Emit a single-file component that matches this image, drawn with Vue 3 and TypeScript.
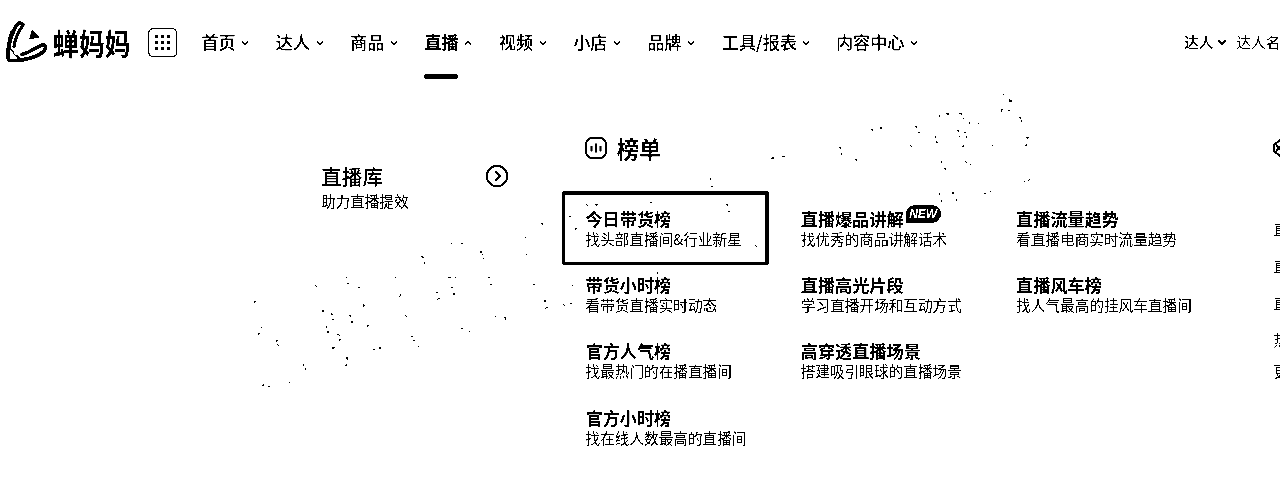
<script setup lang="ts">
interface NavItem { label: string; active?: boolean }
interface Entry { title: string; desc: string; badge?: boolean; boxed?: boolean }

const nav: NavItem[] = [
  { label: '首页' }, { label: '达人' }, { label: '商品' }, { label: '直播', active: true },
  { label: '视频' }, { label: '小店' }, { label: '品牌' }, { label: '工具/报表' }, { label: '内容中心' },
]

const columns: Entry[][] = [
  [
    { title: '今日带货榜', desc: '找头部直播间&行业新星', boxed: true },
    { title: '带货小时榜', desc: '看带货直播实时动态' },
    { title: '官方人气榜', desc: '找最热门的在播直播间' },
    { title: '官方小时榜', desc: '找在线人数最高的直播间' },
  ],
  [
    { title: '直播爆品讲解', desc: '找优秀的商品讲解话术', badge: true },
    { title: '直播高光片段', desc: '学习直播开场和互动方式' },
    { title: '高穿透直播场景', desc: '搭建吸引眼球的直播场景' },
  ],
  [
    { title: '直播流量趋势', desc: '看直播电商实时流量趋势' },
    { title: '直播风车榜', desc: '找人气最高的挂风车直播间' },
  ],
]

const side: string[] = ['直', '直', '直', '热', '更']

// x, y, width, height of each fleck in the background texture
const flecks: number[][] = [
  [254,301,2,1],[254,302,1,1],[315,285,1,1],[316,286,1,1],[346,277,1,1],[347,283,2,1],[358,287,2,1],[395,277,1,1],
  [421,256,2,1],[422,257,2,1],[424,262,1,2],[451,243,1,1],[461,243,2,1],[480,251,2,2],[482,254,1,1],[483,258,1,1],
  [525,237,1,1],[526,254,1,1],[541,223,2,1],[542,224,1,1],[448,277,3,1],[455,277,1,1],[488,277,2,1],[490,284,2,1],
  [451,287,2,1],[453,293,2,2],[436,292,2,1],[438,298,2,1],[437,299,1,1],[399,296,1,1],[400,294,1,2],[533,284,2,1],
  [544,300,2,2],[546,307,2,1],[545,308,1,1],[563,304,1,1],[564,305,1,1],[570,303,2,1],[572,285,1,1],[363,304,1,3],
  [364,305,1,1],[322,310,2,2],[331,313,1,2],[332,314,1,1],[332,319,2,1],[349,315,2,1],[350,316,1,1],[351,321,2,2],
  [326,326,1,2],[327,331,2,2],[337,334,2,1],[339,335,1,1],[339,339,2,1],[339,340,1,1],[367,325,2,1],[367,326,1,1],
  [332,347,3,1],[332,348,2,1],[373,349,2,1],[379,347,2,2],[346,357,2,2],[347,359,1,1],[346,364,1,2],[345,365,1,1],
  [405,315,1,1],[406,316,1,1],[411,336,2,1],[413,340,2,1],[418,346,1,1],[461,328,2,1],[469,331,1,1],[495,316,1,1],
  [504,317,2,1],[505,318,1,2],[261,327,1,1],[258,333,2,1],[258,334,1,1],[276,340,2,1],[276,341,1,1],[277,344,1,1],
  [278,345,1,1],[303,364,1,2],[305,368,1,2],[262,385,2,1],[263,384,1,1],[268,386,2,1],[289,382,1,1],
  [586,204,1,1],[587,205,1,1],[595,204,3,1],[596,205,1,1],[570,216,1,1],[569,216,1,1],[575,228,2,1],[575,229,1,1],
  [650,202,2,1],[710,178,1,2],[711,186,2,1],[726,204,2,1],[727,205,1,1],[728,211,2,1],[755,245,1,1],[756,246,1,1],
  [657,272,1,2],[771,158,3,1],[772,157,2,1],[871,129,2,1],[872,130,1,1],[880,127,2,2],[782,156,3,1],
  [839,147,2,1],[840,148,1,1],[841,153,1,2],[855,159,2,1],[856,160,1,1],[915,126,2,1],[916,127,1,1],[918,132,2,1],
  [910,145,1,1],[911,146,1,1],[939,115,1,2],[946,113,3,1],[947,114,2,1],[959,113,3,1],[961,114,1,1],[963,118,1,1],
  [969,122,1,2],[978,123,1,1],[935,136,1,2],[936,141,1,2],[937,142,1,1],[957,130,2,1],[958,131,1,1],[964,132,2,1],
  [959,136,1,1],[966,136,1,2],[962,146,2,1],[963,145,1,1],[1003,94,1,1],[1009,99,1,1],[1009,100,3,2],
  [1001,109,2,1],[1001,110,1,2],[1008,110,2,1],[1019,117,2,1],[1020,118,1,1],[1021,120,1,2],[1026,137,3,1],
  [1027,138,1,1],[1026,144,1,2],[1025,145,1,1],[992,145,1,1],[941,161,1,2],[944,168,2,1],[945,169,1,1],
  [965,161,1,1],[966,162,1,1],[970,164,1,1],[1024,181,1,1],[1028,180,1,1],[1029,179,1,1],[939,193,1,2],
  [941,200,1,2],[952,192,2,2],[956,199,1,2],[984,193,2,1],[990,191,1,1],
]
</script>

<template>
  <div class="page">
    <svg class="texture" width="1280" height="477" shape-rendering="crispEdges">
      <rect v-for="(f, i) in flecks" :key="i" :x="f[0]" :y="f[1]" :width="f[2]" :height="f[3]" />
    </svg>

    <header class="bar">
      <svg class="mark" width="44" height="44" viewBox="0 0 44 44" fill="none" stroke="#000">
        <path d="M18 4.500C15 2 12.500 3 10.500 7C6 16 3 27 2.800 36C2.800 40.500 5 41 9 40.500C20 40.500 32 37 38.500 31.500C42 28 40.500 24 37 25C30 28 26 32 17 34.500" stroke-width="3.700" stroke-linecap="round" />
        <path d="M17.500 5.500C14 11 10 18 9 27" stroke-width="3.200" stroke-linecap="round" />
        <path d="M7.500 11C4.500 17 3.500 24 3.200 34" stroke-width="3.600" />
        <path d="M5 28L9 33M8 33L13 38M12 35L16 39" stroke-width="1.300" />
        <path d="M27 9.500L34.500 17.500L24 19.500Z" fill="#000" stroke="none" />
      </svg>
      <span class="brand">蝉妈妈</span>
      <svg class="apps" width="30" height="30" viewBox="0 0 30 30">
        <rect x=".7" y=".7" width="28" height="28" rx="4.500" fill="none" stroke="#000" stroke-width="1.300" />
        <template v-for="r in 3" :key="r">
          <rect v-for="c in 3" :key="c" :x="1 + c * 6" :y="1 + r * 6" width="3" height="3" />
        </template>
      </svg>
      <nav class="nav">
        <div v-for="n in nav" :key="n.label" class="nav-item" :class="{ active: n.active }">
          <span>{{ n.label }}</span>
          <svg width="8" height="6" viewBox="0 0 8 6" fill="none" stroke="#000" stroke-width="1.200">
            <path :d="n.active ? 'M.8 4.600L4 1.500L7.200 4.600' : 'M.8 1.200L4 4.300L7.200 1.200'" />
          </svg>
        </div>
      </nav>
      <div class="search">
        <span class="kind">达人</span>
        <svg width="10" height="7" viewBox="0 0 10 7" fill="none" stroke="#000" stroke-width="1.600"><path d="M1 1.200L5 5L9 1.200" /></svg>
        <span class="hint">达人名</span>
      </div>
    </header>

    <main class="panel">
      <section class="library">
        <div>
          <h2>直播库</h2>
          <p>助力直播提效</p>
        </div>
        <svg width="24" height="24" viewBox="0 0 24 24" fill="none" stroke="#000" stroke-width="2">
          <circle cx="12" cy="12" r="10.200" /><path d="M10 7L15 12L10 17" />
        </svg>
      </section>

      <section class="ranks">
        <div class="heading">
          <svg width="22" height="22" viewBox="0 0 22 22" fill="none" stroke="#000">
            <rect x="1" y="1" width="20" height="20" rx="6" stroke-width="1.900" />
            <path d="M6.500 9V14.500M11 6.500V15.500M15.500 9V14.500" stroke-width="2" />
          </svg>
          <h1>榜单</h1>
        </div>
        <div class="columns">
          <div v-for="(col, i) in columns" :key="i" class="column">
            <article v-for="e in col" :key="e.title" :class="{ boxed: e.boxed }">
              <h3>{{ e.title }}<span v-if="e.badge" class="badge">NEW</span></h3>
              <p>{{ e.desc }}</p>
            </article>
          </div>
        </div>
      </section>

      <aside class="side">
        <svg width="22" height="22" viewBox="0 0 22 22" fill="none" stroke="#000" stroke-width="2">
          <path d="M7 3H15L21 11L15 19H7L1 14V8ZM3 8L11 15M3 14L11 7" />
        </svg>
        <ul>
          <li v-for="(s, i) in side" :key="i">{{ s }}</li>
        </ul>
      </aside>
    </main>
  </div>
</template>

<style>
body { margin: 0; background: #fff; overflow: hidden; }
</style>

<style scoped>
.page {
  position: relative; width: 1280px; height: 477px; overflow: hidden;
  background: #fff; color: #000; font-family: "Noto Sans CJK SC", sans-serif;
  filter: grayscale(1) contrast(30);
}
h1, h2, h3, p, ul { margin: 0; padding: 0; white-space: nowrap; }
.texture { position: absolute; inset: 0; }
.bar { display: flex; align-items: center; height: 84px; white-space: nowrap; }
.mark { margin-left: 5px; flex: none; }
.brand { width: 78px; margin-left: 4px; font-size: 25.900px; font-weight: 700; line-height: 30px; transform: scaleY(1.160); }
.apps { margin: 1px 0 0 17px; flex: none; }
.nav { display: flex; gap: 26.650px; margin-left: 23.500px; }
.nav-item { position: relative; display: flex; align-items: center; gap: 6px; font-size: 17.100px; font-weight: 500; line-height: 26px; }
.nav-item span { margin-top: -1px; }
.nav-item svg { flex: none; margin: 1px 0 0 -.5px; }
.nav-item.active { font-weight: 700; }
.active::after { content: ""; position: absolute; left: 0; top: 44.500px; width: 34px; height: 5px; border-radius: 2.500px; background: #000; }
.nav-item:nth-child(n+9) { margin-left: -1px; }
.search { display: flex; align-items: center; margin-left: auto; width: 96px; overflow: hidden; font-size: 14.700px; }
.search svg { flex: none; margin-left: 4px; }
.kind { font-weight: 500; margin-top: -1px; }
.hint { margin: -1px 0 0 9px; }
.panel { display: flex; height: 393px; }
.library { display: flex; justify-content: space-between; width: 188.500px; margin: 80px 0 0 321px; }
.library h2 { font-size: 20.700px; font-weight: 500; line-height: 24px; }
.library p { font-size: 14.600px; line-height: 25px; }
.ranks { width: 640px; margin: 50px 0 0 76.200px; }
.heading { display: flex; align-items: center; gap: 9.500px; height: 30px; }
.heading svg { margin: -2px 0 0 -.2px; }
.heading h1 { font-size: 22.300px; font-weight: 700; line-height: 28px; margin-top: -2px; }
.columns { display: grid; grid-template-columns: repeat(3, 215.300px); margin-top: 44px; }
.column { display: flex; flex-direction: column; gap: 24.200px; }
article { position: relative; height: 42px; }
article h3 { display: flex; font-size: 17.150px; font-weight: 700; line-height: 21px; }
article p { font-size: 14.650px; line-height: 20.500px; }
.boxed::before { content: ""; position: absolute; left: -24px; top: -17px; width: 200px; height: 67px; border: 3px solid #000; border-width: 4px 4px 3px 3px; border-radius: 3px; }
.badge {
  width: 35px; height: 18px; margin: -3px 0 0 2px; border-radius: 9px 9px 9px 1px; background: #000;
  color: #fff; font: italic 700 12px/19px "Liberation Sans", sans-serif; text-align: center;
}
.side { margin: 53px 0 0 47.500px; width: 7px; overflow: hidden; }
.side ul { list-style: none; margin: 55px 0 0 .5px; font-size: 14.600px; }
.side li { height: 37px; line-height: 20px; }
.side li:last-child { margin-top: -6px; }
</style>
